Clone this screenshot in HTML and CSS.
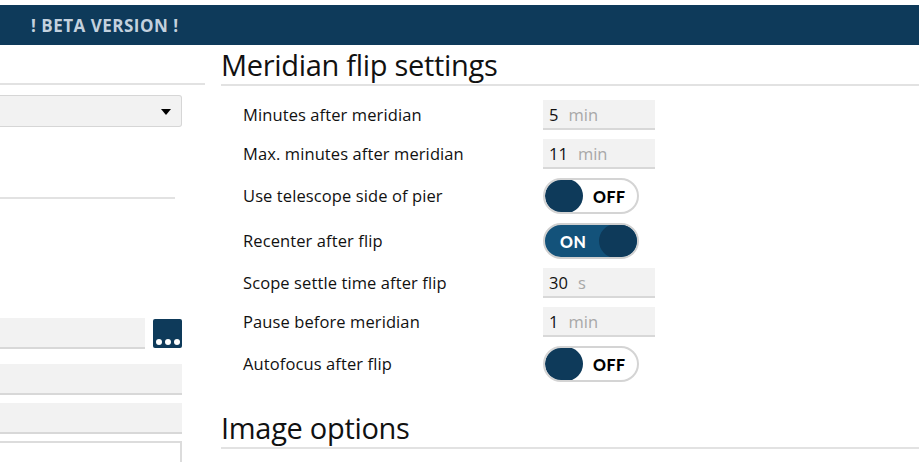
FILE: index.html
```html
<!DOCTYPE html>
<html>
<head>
<meta charset="utf-8">
<link rel="stylesheet" href="styles.css">
</head>
<body>
<div class="topbar"><span class="beta">! BETA VERSION !</span></div>
<div class="main">
  <div class="left">
    <div class="lhead"></div>
    <div class="select"><span class="caret"></span></div>
    <div class="lsep"></div>
    <div class="pathrow">
      <div class="field grow"></div>
      <div class="dots"><span></span><span></span><span></span></div>
    </div>
    <div class="field wide"></div>
    <div class="field wide"></div>
    <div class="box"></div>
  </div>
  <div class="right">
    <div class="rhead">Meridian flip settings</div>
    <div class="grid">
      <div class="label">Minutes after meridian</div>
      <div class="num"><span class="v">5</span><span class="u">min</span></div>
      <div class="label">Max. minutes after meridian</div>
      <div class="num"><span class="v">11</span><span class="u">min</span></div>
      <div class="label">Use telescope side of pier</div>
      <div class="toggle off"><span class="knob"></span><span class="tt">OFF</span></div>
      <div class="label">Recenter after flip</div>
      <div class="toggle on"><span class="tt">ON</span><span class="knob"></span></div>
      <div class="label">Scope settle time after flip</div>
      <div class="num"><span class="v">30</span><span class="u">s</span></div>
      <div class="label">Pause before meridian</div>
      <div class="num"><span class="v">1</span><span class="u">min</span></div>
      <div class="label">Autofocus after flip</div>
      <div class="toggle off"><span class="knob"></span><span class="tt">OFF</span></div>
    </div>
    <div class="rhead second">Image options</div>
  </div>
</div>
</body>
</html>
```
FILE: styles.css
```css
html, body {
  margin: 0;
  padding: 0;
  background: #ffffff;
  overflow: hidden;
}
body {
  width: 919px;
  height: 462px;
  font-family: "Open Sans", "Noto Sans", sans-serif;
  color: #111;
}
.topbar {
  margin-top: 5px;
  height: 40px;
  background: #0e3a5a;
  display: flex;
  align-items: center;
  padding-left: 31px;
}
.beta {
  font-family: "Open Sans", sans-serif;
  font-weight: 700;
  font-size: 17px;
  color: #c3d1de;
  letter-spacing: 0.5px;
}
.main {
  display: flex;
  gap: 16px;
}
.left {
  width: 205px;
  display: flex;
  flex-direction: column;
}
.lhead {
  height: 38px;
  border-bottom: 2px solid #e2e2e2;
}
.select {
  margin-top: 10px;
  width: 181px;
  height: 30px;
  background: #f2f2f2;
  border: 1px solid #d6d6d6;
  border-left: none;
  border-radius: 0 3px 3px 0;
  position: relative;
}
.caret {
  position: absolute;
  right: 10px;
  top: 13px;
  width: 0;
  height: 0;
  border-left: 5px solid transparent;
  border-right: 5px solid transparent;
  border-top: 6px solid #000;
}
.lsep {
  margin-top: 70px;
  width: 175px;
  height: 2px;
  background: #e2e2e2;
}
.pathrow {
  margin-top: 119px;
  display: flex;
  gap: 8px;
  width: 182px;
  align-items: flex-start;
}
.field {
  height: 29px;
  background: #f2f2f2;
  border-bottom: 2px solid #d8d8d8;
}
.grow { width: 145px; }
.wide {
  width: 182px;
  margin-top: 15px;
}
.pathrow + .wide { margin-top: 15px; }
.wide + .wide { margin-top: 8px; }
.dots {
  width: 29px;
  height: 29px;
  margin-top: 1px;
  background: #0e3a5a;
  border-radius: 2px;
  display: flex;
  align-items: flex-end;
  justify-content: center;
  gap: 3px;
  padding-bottom: 3px;
  box-sizing: border-box;
}
.dots span {
  width: 6px;
  height: 6px;
  border-radius: 50%;
  background: #fff;
}
.box {
  margin-top: 7px;
  width: 180px;
  height: 40px;
  border: 2px solid #dcdcdc;
  border-left: none;
}
.right {
  flex: 1;
  display: flex;
  flex-direction: column;
}
.rhead {
  font-size: 29px;
  line-height: 36px;
  height: 37px;
  border-bottom: 2px solid #e2e2e2;
  letter-spacing: -0.3px;
  color: #111;
  padding-top: 2px;
}
.second {
  margin-top: 26px;
}
.grid {
  margin-top: 14px;
  padding-left: 22px;
  display: grid;
  grid-template-columns: 300px 112px;
  row-gap: 9px;
  align-items: center;
}
.label {
  font-size: 16.5px;
  color: #111;
  letter-spacing: 0.1px;
  margin-top: -2px;
}
.num {
  height: 28px;
  background: #f2f2f2;
  border-bottom: 2px solid #d8d8d8;
  display: flex;
  align-items: center;
  padding-left: 6px;
  font-size: 16.5px;
}
.num .v {
  color: #111;
  margin-right: 10px;
}
.num .u {
  color: #a8a8a8;
}
.toggle {
  width: 96px;
  height: 36px;
  box-sizing: border-box;
  border-radius: 18px;
  border: 2px solid #d4d4d4;
  display: flex;
  align-items: center;
  font-family: "Lato", "DejaVu Sans", sans-serif;
  font-weight: 900;
  font-size: 16px;
  overflow: hidden;
}
.toggle .knob {
  width: 38px;
  height: 34px;
  border-radius: 17px;
  background: #0e3a5a;
  flex: none;
}
.toggle.off {
  background: #fff;
}
.toggle.off .tt {
  margin-left: 10px;
  color: #000;
  letter-spacing: 0.5px;
}
.toggle.on {
  background: #13527a;
  border-color: #d0d0d0;
  justify-content: space-between;
}
.toggle.on .tt {
  margin-left: 15px;
  color: #fff;
  letter-spacing: 0.5px;
}
```
